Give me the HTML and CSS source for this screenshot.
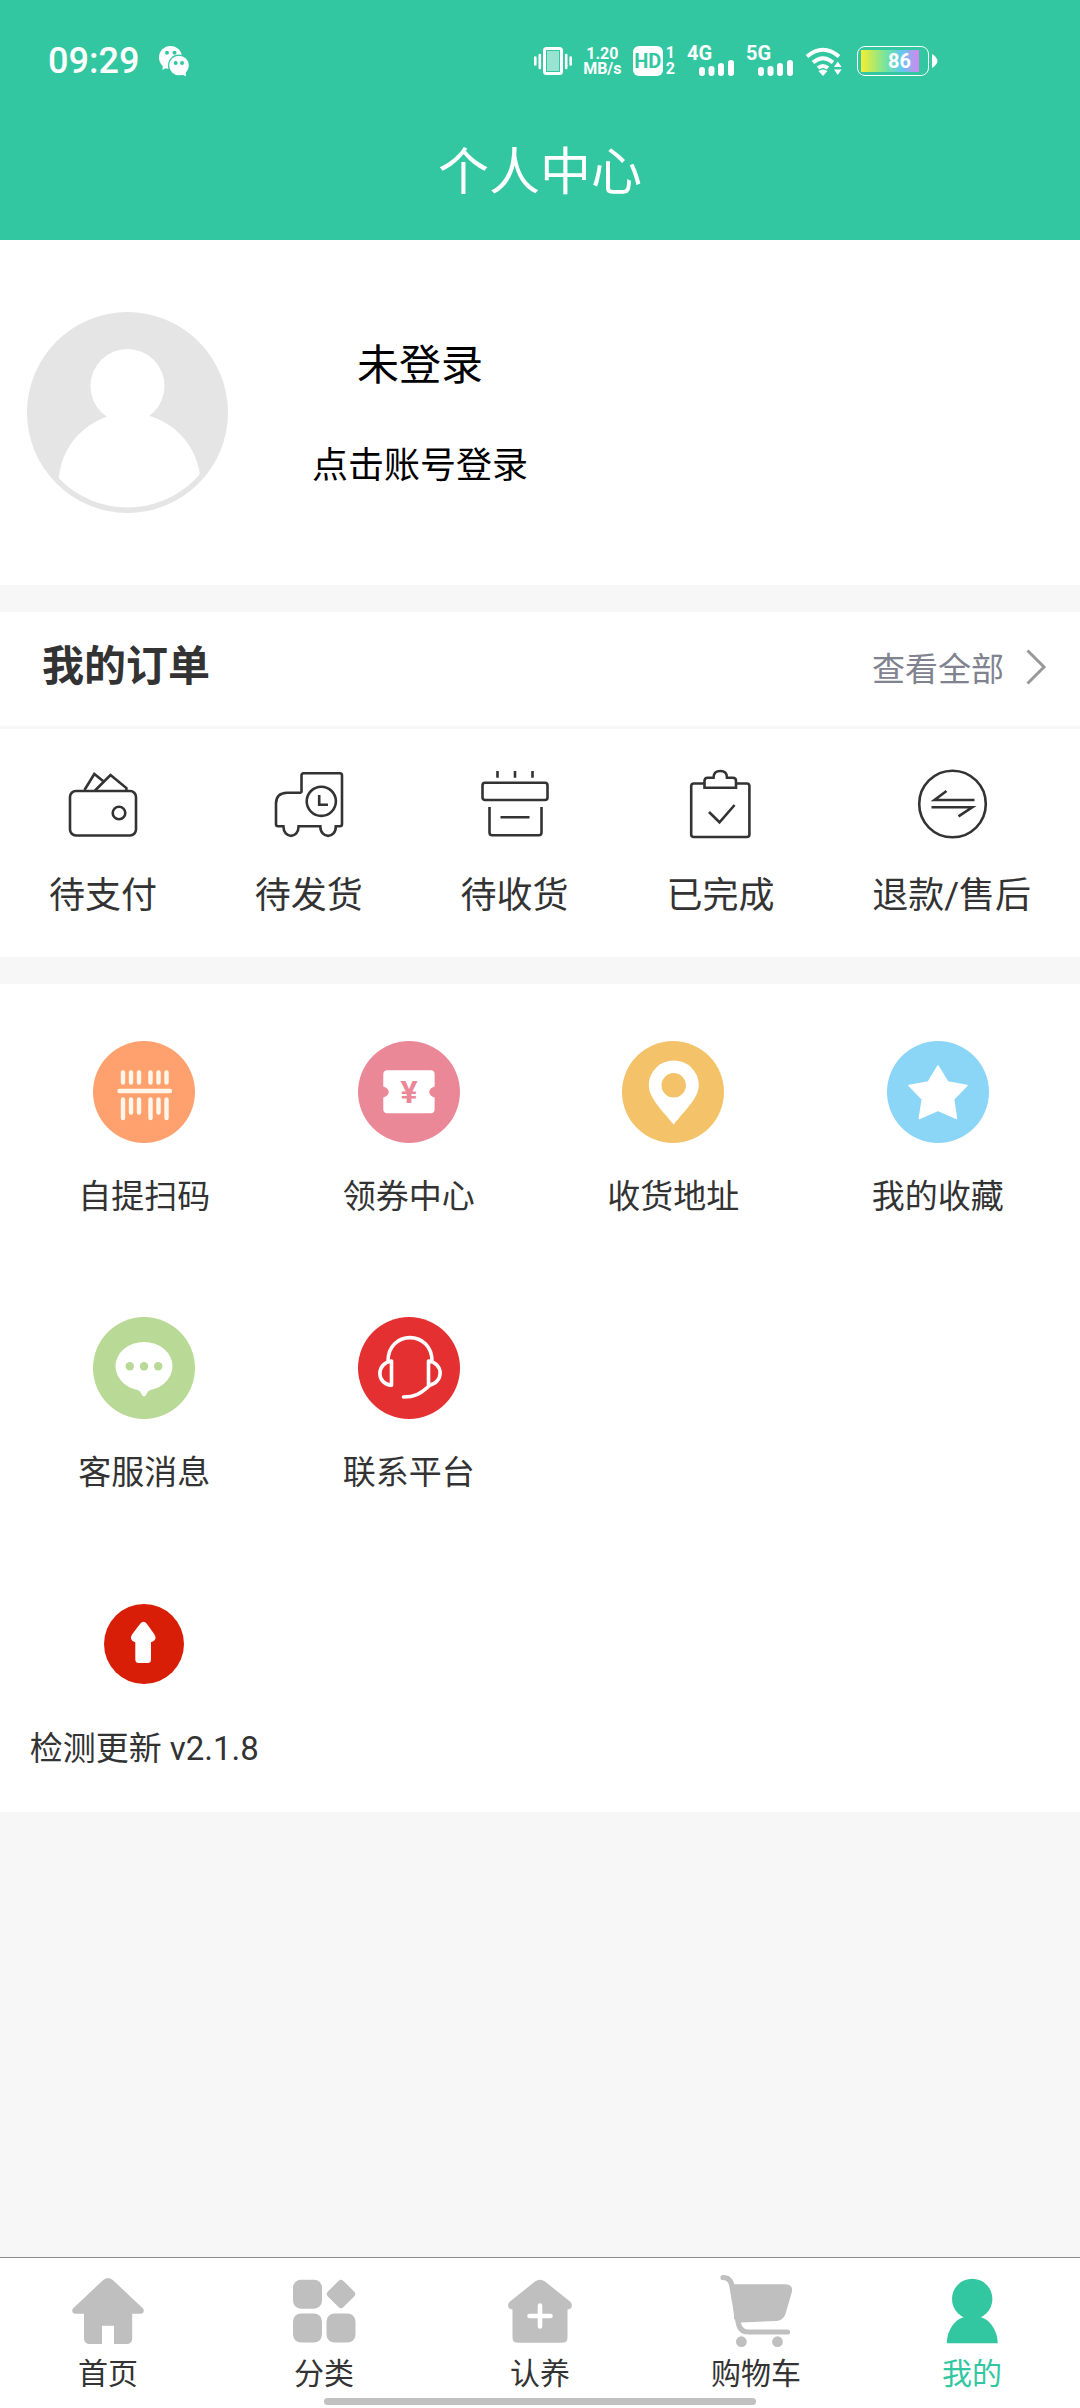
FILE: index.html
```html
<!DOCTYPE html>
<html lang="zh-CN">
<head>
<meta charset="utf-8">
<meta name="viewport" content="width=device-width">
<title>个人中心</title>
<link rel="stylesheet" href="styles.css">
</head>
<body>
<div class="app">
  <header class="top">
    <div class="status">
      <div class="status-left">
        <time class="clock">09:29</time>
        <svg class="wechat" viewBox="0 0 30 30" width="30" height="30" aria-hidden="true">
          <circle cx="11.500" cy="11.500" r="11.500" fill="#fff"/><path d="M4 17L3.500 24L9 21Z" fill="#fff"/>
          <circle cx="8" cy="6.700" r="2" fill="#32c7a1"/><circle cx="15.500" cy="6.700" r="2" fill="#32c7a1"/>
          <circle cx="20" cy="19.500" r="11" fill="#32c7a1"/>
          <circle cx="20" cy="19.500" r="9.800" fill="#fff"/><path d="M22 28L27 30.300L26.500 25Z" fill="#fff"/>
          <circle cx="16.700" cy="17" r="2" fill="#32c7a1"/><circle cx="23" cy="17" r="2" fill="#32c7a1"/>
        </svg>
      </div>
      <div class="status-right">
        <svg viewBox="0 0 38 30" width="38" height="30" aria-hidden="true">
          <rect x="10.500" y="2.500" width="17" height="25" rx="2" fill="none" stroke="#fff" stroke-width="3"/>
          <rect x="13" y="5" width="12" height="20" fill="#fff" opacity=".5"/>
          <path d="M1.300 11.500V18.500M36.700 11.500V18.500M5.800 9V22M32.200 9V22" stroke="#fff" stroke-width="2.600" stroke-linecap="round"/>
        </svg>
        <div class="speed"><span>1.20</span><span>MB/s</span></div>
        <div class="hd"><span class="hd-badge">HD</span><span class="hd-sims"><span>1</span><span>2</span></span></div>
        <div class="signal"><span>4G</span>
          <svg viewBox="0 0 35 16" width="35" height="16" aria-hidden="true"><path d="M3 10V13M12.500 9V13M22 6V13M32 3V13" stroke="#fff" stroke-width="6" stroke-linecap="round"/></svg>
        </div>
        <div class="signal"><span>5G</span>
          <svg viewBox="0 0 35 16" width="35" height="16" aria-hidden="true"><path d="M3 10V13M12.500 9V13M22 6V13M32 3V13" stroke="#fff" stroke-width="6" stroke-linecap="round"/></svg>
        </div>
        <svg class="wifi" viewBox="0 0 37 30" width="37" height="30" aria-hidden="true">
          <g fill="none" stroke="#fff" stroke-width="4">
            <path d="M2 10.500Q18 -3 34 10.500"/><path d="M8 16.500Q18 8 28 16.500"/><path d="M13 22Q18 18 23 22"/>
          </g>
          <path d="M13.500 25Q18 22 22.500 25L18 30Z" fill="#fff"/>
          <path d="M29 21L32.800 15.500L36.600 21ZM29 23.500H36.600L32.800 29Z" fill="#fff"/>
        </svg>
        <div class="battery"><span class="battery-case"><span class="battery-fill">86</span></span>
          <svg viewBox="0 0 7 14" width="7" height="14" aria-hidden="true"><path d="M1 0Q6 3 6.500 7Q6 11 1 14Z" fill="#fff"/></svg>
        </div>
      </div>
    </div>
    <h1 class="title">个人中心</h1>
  </header>

  <main class="content">
    <a class="profile" href="#login">
      <svg class="avatar" viewBox="0 0 201 201" width="201" height="201" aria-hidden="true">
        <defs><clipPath id="inner"><circle cx="100.500" cy="100.500" r="95"/></clipPath></defs>
        <circle cx="100.500" cy="100.500" r="100.500" fill="#e5e5e5"/>
        <circle cx="100.500" cy="74" r="37" fill="#fff"/>
        <circle cx="102.500" cy="172" r="71" fill="#fff" clip-path="url(#inner)"/>
      </svg>
      <span class="profile-text"><strong>未登录</strong><span>点击账号登录</span></span>
    </a>

    <section class="orders">
      <div class="orders-head">
        <h2>我的订单</h2>
        <a class="more" href="#orders">查看全部
          <svg viewBox="0 0 20 36" width="20" height="36" aria-hidden="true"><path d="M1.500 1.500L18 18L1.500 34.500" fill="none" stroke="#999" stroke-width="3"/></svg>
        </a>
      </div>
      <nav class="order-list" aria-label="我的订单">
        <a href="#pay">
          <svg viewBox="0 0 70 70" width="70" height="70" aria-hidden="true"><rect x="2" y="22" width="66" height="44.500" rx="6"/><circle cx="51" cy="44" r="6.300"/><path d="M16.500 21L26.300 5L36 12.700M27 21.500L42.500 6L58.400 19V22"/></svg>
          <span>待支付</span></a>
        <a href="#ship">
          <svg viewBox="0 0 70 70" width="70" height="70" aria-hidden="true"><path d="M27.500 23.700V6.500Q27.500 4.300 29.700 4.300H66Q68 4.300 68 6.500V55Q68 57.300 66 57.300H61.800C62 70 46.300 70 46.300 57.300H24.600C24.600 70 9.400 70 9.400 57.300H4Q2 57.300 2 55V34.500Q2 24 13 23.700H27.500"/><circle cx="47.300" cy="32.300" r="14.600"/><path d="M45.200 26V35.700H54"/></svg>
          <span>待发货</span></a>
        <a href="#receive">
          <svg viewBox="0 0 70 70" width="70" height="70" aria-hidden="true"><rect x="2.500" y="13.700" width="65" height="17.300" rx="2.500"/><path d="M17.500 2V8.700M35 2V8.700M52.500 2V8.700M9.500 38V63.500Q9.500 66.300 12.300 66.300H58.700Q61.500 66.300 61.500 63.500V38M20.500 48.300H49.500"/></svg>
          <span>待收货</span></a>
        <a href="#done">
          <svg viewBox="0 0 70 70" width="70" height="70" aria-hidden="true"><path d="M19.500 14.500H9Q6.200 14.500 6.200 17V65.500Q6.200 68 9 68H61.800Q64.400 68 64.400 65.500V17Q64.400 14.500 61.800 14.500H51M19.500 18.700V12Q19.500 8.700 22.500 8.700H28.500Q28.500 2 35.300 2Q42 2 42 8.700H48Q51 8.700 51 12V18.700ZM24 43L34.500 53.300L49.600 36"/></svg>
          <span>已完成</span></a>
        <a href="#refund">
          <svg viewBox="0 0 70 70" width="70" height="70" aria-hidden="true"><circle cx="35.500" cy="35" r="33.300"/><path d="M57.500 31H17.500L29.500 22M14.500 38.300H55.200L41.500 47.300"/></svg>
          <span>退款/售后</span></a>
      </nav>
    </section>

    <nav class="tools" aria-label="服务">
      <a href="#scan">
        <svg viewBox="0 0 102 102" width="102" height="102" aria-hidden="true"><circle cx="51" cy="51" r="51" fill="#ffa06f"/><path d="M30 31.500V41.500M38 31.500V41.500M46 31.500V41.500M57.500 31.500V41.500M65.500 31.500V41.500M73.500 31.500V41.500M26.500 50H77M30 58.500V77M38 58.500V71.500M46 58.500V71.500M57.500 58.500V77M65.500 58.500V71.500M73.500 58.500V77" stroke="#fff6ea" stroke-width="4.400" stroke-linecap="round"/></svg>
        <span>自提扫码</span></a>
      <a href="#coupon">
        <svg viewBox="0 0 102 102" width="102" height="102" aria-hidden="true"><circle cx="51" cy="51" r="51" fill="#eb8898"/><path d="M29.300 29.300H72.600Q76.600 29.300 76.600 33.300V45.500C69.500 47.500 69.500 54.500 76.600 56.500V68.300Q76.600 72.300 72.600 72.300H29.300Q25.300 72.300 25.300 68.300V56.500C32.500 54.500 32.500 47.500 25.300 45.500V33.300Q25.300 29.300 29.300 29.300Z" fill="#fff"/><text class="yen" x="51" y="62" text-anchor="middle">¥</text></svg>
        <span>领券中心</span></a>
      <a href="#address">
        <svg viewBox="0 0 102 102" width="102" height="102" aria-hidden="true"><circle cx="51" cy="51" r="51" fill="#f4c268"/><path d="M51.700 83.700C42 71 26.800 58 26.800 44A25 24.500 0 0 1 76.800 44C76.800 58 61 71 51.700 83.700Z" fill="#fff"/><circle cx="51.700" cy="44.300" r="12.200" fill="#f4c268"/></svg>
        <span>收货地址</span></a>
      <a href="#favorites">
        <svg viewBox="0 0 102 102" width="102" height="102" aria-hidden="true"><circle cx="51" cy="51" r="51" fill="#8bd6f7"/><path d="M51 25L60.700 41L80 44.500L66.600 58.300L69.500 77.500L51 69.300L32.300 77.500L35.300 58.300L22 44.500L41.300 41Z" fill="#fff" stroke="#fff" stroke-width="1.500" stroke-linejoin="round"/></svg>
        <span>我的收藏</span></a>
      <a href="#messages">
        <svg viewBox="0 0 102 102" width="102" height="102" aria-hidden="true"><circle cx="51" cy="51" r="51" fill="#b9d996"/><ellipse cx="51" cy="49.300" rx="28.500" ry="24.300" fill="#fff"/><path d="M44 72Q46.500 73 48.500 77Q51 82 53.500 77Q55.500 73 58 72Z" fill="#fff"/><g fill="#b9d996"><circle cx="36.800" cy="49.300" r="4.200"/><circle cx="51" cy="49.300" r="4.200"/><circle cx="65.200" cy="49.300" r="4.200"/></g></svg>
        <span>客服消息</span></a>
      <a href="#contact">
        <svg viewBox="0 0 102 102" width="102" height="102" aria-hidden="true"><circle cx="51" cy="51" r="51" fill="#e43030"/><path d="M30 45C29 12.500 75 12.500 74 45M33.500 44V68.300C18 67 18 46 33.500 44ZM70.500 44C86 46 86 66 70.500 68.300ZM71.500 68.500C62 77.500 56 80 45.500 80" fill="none" stroke="#fff" stroke-width="3.600" stroke-linecap="round" stroke-linejoin="round"/></svg>
        <span>联系平台</span></a>
      <a href="#update" class="new-row">
        <svg viewBox="0 0 102 102" width="102" height="102" aria-hidden="true"><circle cx="51" cy="51" r="40" fill="#d81e06"/><path d="M47 31Q50.500 26.500 54 31L61.500 41.500Q65 47.500 58 49.200V66.500Q58 70 54.500 70H46Q42.300 70 42.300 66.500V49.200Q35.500 47.500 39 41.500Z" fill="#fff"/></svg>
        <span>检测更新 v2.1.8</span></a>
    </nav>
  </main>

  <nav class="tabs" aria-label="主导航">
    <a href="#home">
      <svg viewBox="0 0 76 76" width="76" height="76" aria-hidden="true"><path d="M33.500 5.700Q38 2.300 42.500 5.700L73 34.500Q75.500 38.500 71 39.700H62.200V64Q62.200 70 56.500 70H44V51.700H32V70H20Q14 70 14 64V39.700H5Q.500 38.500 3 34.500Z"/></svg>
      <span>首页</span></a>
    <a href="#category">
      <svg viewBox="0 0 76 76" width="76" height="76" aria-hidden="true"><rect x="7" y="5.700" width="29" height="29" rx="8"/><rect x="7" y="39.500" width="29" height="29" rx="8"/><rect x="40.500" y="39.500" width="29" height="29" rx="8"/><rect x="44" y="9" width="22" height="22" rx="3.500" transform="rotate(45 55 20)"/></svg>
      <span>分类</span></a>
    <a href="#adopt">
      <svg viewBox="0 0 76 76" width="76" height="76" aria-hidden="true"><path d="M33 7.500Q38 4 43 7.500L68 27.500C72 31.500 69 35.500 65.500 35.500V63.500Q65.500 68.700 60.500 68.700H15.500Q10.500 68.700 10.500 63.500V35.500C7 35.500 4 31.500 8 27.500Z"/><path d="M27.500 42H48.500M38 31.500V52.500" stroke="#fff" stroke-width="4.600" stroke-linecap="round"/></svg>
      <span>认养</span></a>
    <a href="#cart">
      <svg viewBox="0 0 76 76" width="76" height="76" aria-hidden="true"><path d="M15 10.300H68Q75 11 74 17.500L67.500 40Q65 46.500 59 46.900L22.500 48.500L16 45Z"/><path d="M5 3.500C11 3.500 13.700 8 14.200 14L20 47.500Q21.500 58 30 58H69.500" fill="none" stroke="#bfbfbf" stroke-width="5.200" stroke-linecap="round"/><circle cx="23.400" cy="67.700" r="5.400"/><circle cx="59.500" cy="67.700" r="5.400"/></svg>
      <span>购物车</span></a>
    <a href="#me" class="active" aria-current="page">
      <svg viewBox="0 0 76 76" width="76" height="76" aria-hidden="true"><circle cx="38.200" cy="25" r="20.200"/><path d="M12.800 69.300C13 56 21 45 30.500 43H46C55.500 45 63.500 56 63.700 69.300Z"/></svg>
      <span>我的</span></a>
  </nav>
</div>
</body>
</html>
```
FILE: styles.css
```css
* { box-sizing: border-box; }

body {
  margin: 0;
  background: #f7f7f7;
  color: #333;
  font-family: Roboto, "Noto Sans CJK SC", sans-serif;
  font-size: 33px;
}

a { color: inherit; text-decoration: none; }
svg { display: block; flex: none; overflow: visible; }
h1, h2 { margin: 0; }

.app {
  min-height: 100vh;
  display: flex;
  flex-direction: column;
}

/* Header */
.top { background: #32c7a1; color: #fff; padding-bottom: 24px; }

.status {
  display: flex;
  justify-content: space-between;
  align-items: center;
  height: 122px;
  padding: 0 142px 0 48px;
}
.status-left { display: flex; align-items: center; gap: 20px; }
.clock { font-size: 36px; line-height: 44px; font-weight: 500; }
.status-right {
  display: flex;
  align-items: center;
  gap: 12px;
  font-weight: 700;
}
.speed {
  display: flex;
  flex-direction: column;
  align-items: center;
  width: 37px;
  font-size: 16px;
  line-height: 15px;
}
.hd { display: flex; align-items: center; gap: 3px; }
.hd-badge {
  width: 30px;
  border-radius: 6px;
  background: #fff;
  color: #32c7a1;
  font-size: 20px;
  line-height: 30px;
  text-align: center;
}
.hd-sims { display: flex; flex-direction: column; font-size: 16px; line-height: 16px; }
.signal {
  display: grid;
  width: 47px;
  height: 30px;
  font-size: 20px;
  line-height: 15px;
}
.signal span, .signal svg { grid-area: 1 / 1; }
.signal svg { justify-self: end; align-self: end; }
.battery { display: flex; align-items: center; gap: 2px; margin-left: 3px; }
.battery-case {
  display: flex;
  width: 72px;
  height: 30px;
  padding: 3px;
  border: 1px solid #fff;
  border-radius: 8px;
}
.battery-fill {
  width: 58px;
  padding-right: 8px;
  background: linear-gradient(90deg, #f6ee2e, #6fe3a4 45%, #62c8f0 70%, #d885ef);
  font-size: 20px;
  line-height: 22px;
  text-align: right;
}
.title {
  padding-top: 8px;
  font-size: 51px;
  line-height: 86px;
  font-weight: 400;
  text-align: center;
}

/* Profile */
.profile {
  display: flex;
  align-items: center;
  gap: 84px;
  padding: 72px 27px;
  background: #fff;
  color: #000;
}
.profile-text {
  display: flex;
  flex-direction: column;
  align-items: center;
  gap: 40px;
  padding-top: 6px;
  font-size: 36px;
  line-height: 60px;
}
.profile-text strong { font-size: 42px; font-weight: 400; }

/* Orders */
.orders { margin: 27px 0; background: #fff; }
.orders-head {
  display: flex;
  justify-content: space-between;
  align-items: center;
  height: 117px;
  padding: 0 34px 5px 42px;
  border-bottom: 3px solid #f7f7f7;
}
.orders-head h2 { font-size: 42px; line-height: 60px; font-weight: 700; }
.more { display: flex; align-items: center; gap: 22px; color: #80838f; }
.order-list {
  display: flex;
  justify-content: space-around;
  padding: 40px 0 35px;
  font-size: 36px;
  line-height: 52px;
}
.order-list a {
  display: flex;
  flex-direction: column;
  align-items: center;
  gap: 31px;
}
.order-list svg { fill: none; stroke: #333; stroke-width: 2.6px; }

/* Services */
.tools {
  display: grid;
  grid-template-columns: repeat(4, 1fr);
  padding: 0 10px 0 12px;
  background: #fff;
}
.tools a {
  display: flex;
  flex-direction: column;
  align-items: center;
  gap: 28px;
  padding: 57px 0 37px;
  line-height: 52px;
  white-space: nowrap;
}
.tools .new-row { grid-column-start: 1; }
.yen { font: 700 32px Roboto, sans-serif; fill: #eb8898; }

/* Tab bar */
.tabs {
  position: relative;
  display: grid;
  grid-template-columns: repeat(5, 1fr);
  margin-top: auto;
  padding: 16px 0 12px;
  border-top: 1px solid #8c8c8c;
  background: #fff;
  font-size: 30px;
  line-height: 44px;
}
.tabs a { display: flex; flex-direction: column; align-items: center; gap: 2px; }
.tabs svg { fill: #bfbfbf; }
.tabs .active { color: #32c7a1; }
.tabs .active svg { fill: #32c7a1; }
.tabs::after {
  content: "";
  position: absolute;
  bottom: 3px;
  left: 30%;
  right: 30%;
  height: 7px;
  border-radius: 4px;
  background: #c1c1c1;
}
```
